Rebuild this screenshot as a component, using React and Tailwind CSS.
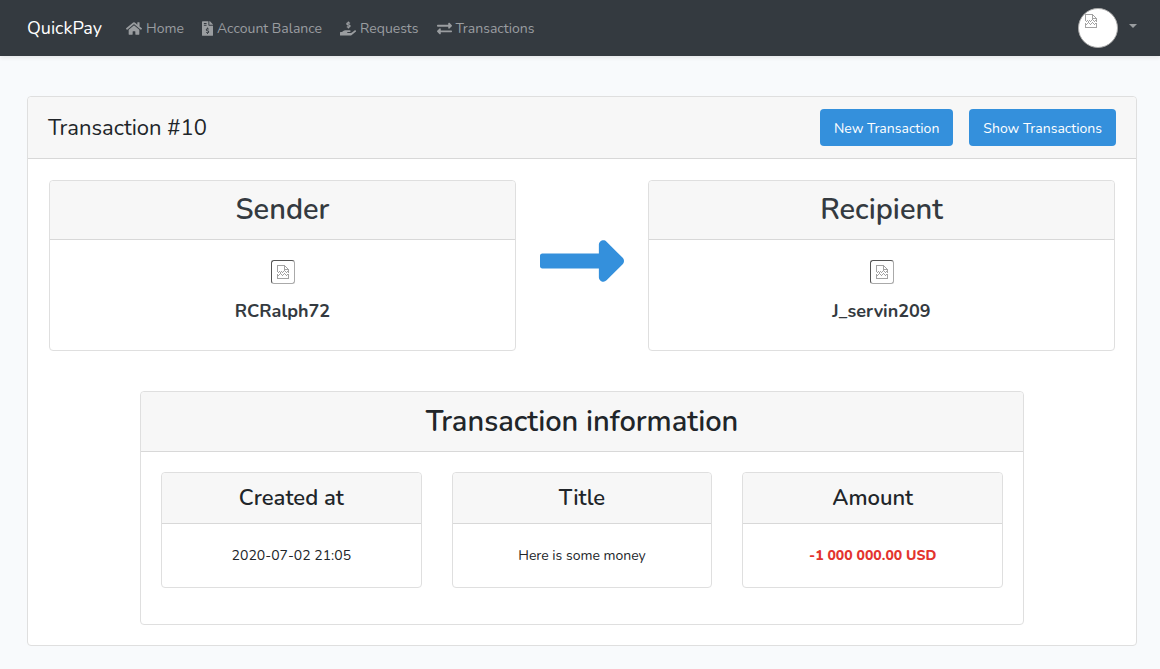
import { FaHome, FaFileInvoiceDollar, FaHandHoldingUsd, FaExchangeAlt, FaLongArrowAltRight } from "react-icons/fa";

const links = [
  { label: "Home", Icon: FaHome, width: "w-4" },
  { label: "Account Balance", Icon: FaFileInvoiceDollar, width: "w-[11px]" },
  { label: "Requests", Icon: FaHandHoldingUsd, width: "w-4" },
  { label: "Transactions", Icon: FaExchangeAlt, width: "w-[15px]" },
];

function MissingPicture() {
  return (
    <svg width="12" height="14" viewBox="0 0 12 14" fill="none" stroke="#a3a3a3" shapeRendering="crispEdges" aria-hidden="true">
      <path d="M0.5 7V0.5H8M8 1.5H9M9 2.5H10M10 3.5H11M11.5 4V8M7.5 0V4.5H11" />
      <path d="M0 6.5H1M1 7.5H2M2 6.5H3M3 7.5H4M4 6.5H5M5 7.5H6M6 6.5H7M7 5.5H8M8 6.5H9M9 7.5H10M10 6.5H11" />
      <path d="M0.5 10V13.5H11.5V10M0 9.5H1M1 10.5H2M2 9.5H3M3 8.5H4M4 9.5H5M5 10.5H6M6 9.5H7M7 8.5H8M8 9.5H9M9 10.5H10M10 9.5H12" />
    </svg>
  );
}

function Card({ title, headerClass, bodyClass, className = "", children }) {
  return (
    <section className={`rounded border border-[#dfdfdf] bg-white ${className}`}>
      <header className={`flex items-center justify-center rounded-t border-b border-[#d8d8d8] bg-[#f7f7f7] font-semibold ${headerClass}`}>
        <h2>{title}</h2>
      </header>
      <div className={bodyClass}>{children}</div>
    </section>
  );
}

function Person({ role, name }) {
  return (
    <Card title={role} className="flex-1 text-[#343a40]" headerClass="h-[59px] text-[29px]" bodyClass="flex h-[110px] flex-col items-center pt-5">
      <span role="img" aria-label={name} className="flex size-6 items-center justify-center rounded-[3px] border border-t-[#555] border-r-[#aaa] border-b-[#aaa] border-l-[#555]">
        <MissingPicture />
      </span>
      <p className="mt-[13px] text-lg font-bold">{name}</p>
    </Card>
  );
}

function Detail({ title, children }) {
  return (
    <Card title={title} className="flex-1" headerClass="h-[51px] pt-0.5 text-[22px]" bodyClass="flex h-[63px] items-center justify-center text-sm">
      {children}
    </Card>
  );
}

export default function App() {
  return (
    <div className="min-h-screen bg-[#f8fafc] font-[Nunito,'Noto_Sans',sans-serif] text-sm text-[#212529]">
      <nav className="flex h-14 items-center bg-[#343a40] pr-[23px] pl-[27px] shadow-[0_2px_4px_rgba(0,0,0,0.075)]">
        <a href="#" className="mr-6 text-lg text-white">QuickPay</a>
        <div className="flex gap-[18px] pt-0.5 text-[#9a9da0]">
          {links.map(({ label, Icon, width }) => (
            <a key={label} href="#" className="flex items-center gap-1">
              <Icon className={`mb-px h-[15px] ${width}`} />
              {label}
            </a>
          ))}
        </div>
        <button type="button" aria-label="Account menu" className="ml-auto flex items-center gap-[11px]">
          <span className="size-10 rounded-full border border-[#aaa] bg-white pt-[5px] pl-[6px]">
            <MissingPicture />
          </span>
          <svg className="mb-1" width="8" height="4" viewBox="0 0 8 4" aria-hidden="true"><path d="M0 0h8L4 4z" fill="#9a9da0" /></svg>
        </button>
      </nav>
      <main className="pt-10 pr-[23px] pb-[23px] pl-[27px]">
        <div className="rounded border border-[#dfdfdf] bg-white">
          <header className="flex h-[62px] items-center gap-4 rounded-t border-b border-[#d8d8d8] bg-[#f7f7f7] px-5">
            <h1 className="mr-auto pt-0.5 text-[22px]">Transaction #10</h1>
            <button type="button" className="h-[37px] rounded bg-[#3490dc] px-[14px] pt-0.5 text-white">New Transaction</button>
            <button type="button" className="h-[37px] rounded bg-[#3490dc] px-[14px] pt-0.5 text-white">Show Transactions</button>
          </header>
          <div className="px-[21px] pt-[21px] pb-5">
            <div className="flex">
              <Person role="Sender" name="RCRalph72" />
              <div className="flex w-[132px] items-start justify-center pt-[33px]">
                <FaLongArrowAltRight className="size-24 text-[#3490dc]" />
              </div>
              <Person role="Recipient" name="J_servin209" />
            </div>
            <Card title="Transaction information" className="mx-[91px] mt-10" headerClass="h-[60px] text-[29px]" bodyClass="flex gap-[30px] px-5 pt-5 pb-9">
              <Detail title="Created at">2020-07-02 21:05</Detail>
              <Detail title="Title">Here is some money</Detail>
              <Detail title="Amount"><strong className="font-extrabold text-[#e3342f]">-1 000 000.00 USD</strong></Detail>
            </Card>
          </div>
        </div>
      </main>
    </div>
  );
}
